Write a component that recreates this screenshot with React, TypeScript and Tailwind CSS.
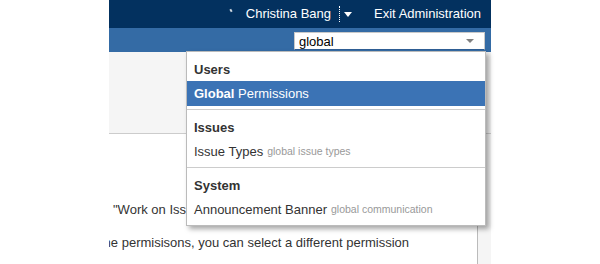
import React from 'react';

type Item = { strong?: string; label: string; hint?: string; active?: boolean };
type Section = { title: string; items: Item[] };

const sections: Section[] = [
    { title: 'Users', items: [{ strong: 'Global', label: ' Permissions', active: true }] },
    { title: 'Issues', items: [{ label: 'Issue Types', hint: 'global issue types' }] },
    { title: 'System', items: [{ label: 'Announcement Banner', hint: 'global communication' }] },
];

function Suggestions() {
    return (
        <div className="absolute left-[186px] top-[51px] w-[300px] bg-white border border-[#bbbbbb] shadow-[3px_3px_5px_rgba(0,0,0,0.35)]">
            {sections.map((s, i) => (
                <div key={s.title} className={i > 0 ? 'border-t border-[#cccccc] pt-[4px] pb-[3px]' : 'pt-[4px] pb-[3px]'}>
                    <div className="h-[25px] pt-[2px] flex items-center px-[7px] text-[13px] font-bold text-[#333333]">{s.title}</div>
                    {s.items.map((it) => (
                        <div
                            key={it.label}
                            className={
                                it.active
                                    ? 'h-[25px] flex items-center px-[7px] text-[13px] bg-[#3b73b5] text-white'
                                    : 'h-[25px] flex items-center px-[7px] text-[13px] text-[#333333]'
                            }
                        >
                            {it.strong && <span className="font-bold">{it.strong}</span>}
                            <span className="whitespace-pre">{it.label}</span>
                            {it.hint && <span className="ml-[4px] text-[10.5px] text-[#999999]">{it.hint}</span>}
                        </div>
                    ))}
                </div>
            ))}
        </div>
    );
}

export default function App() {
    return (
        <div
            className="relative w-[600px] h-[264px] overflow-hidden bg-white"
            style={{ fontFamily: '"Liberation Sans", Arial, sans-serif' }}
        >
            <div className="ml-[109px] w-[382px] h-full flex flex-col">
                {/* top header */}
                <div className="h-[28px] bg-[#03315f] flex items-center justify-end pr-[10px] text-white text-[13px]">
                    <span className="w-[2px] h-[3px] bg-white/80 mb-[7px] mr-[14px] rotate-[-30deg]" />
                    <span>Christina Bang</span>
                    <span className="ml-[8px] h-[16px] border-l border-dotted border-white" />
                    <svg width="8" height="5" viewBox="0 0 8 5" className="ml-[4px]">
                        <path d="M0 0h8L4 5z" fill="#ffffff" />
                    </svg>
                    <span className="ml-[22px]">Exit Administration</span>
                </div>

                {/* blue nav bar */}
                <div className="h-[24px] bg-[#346ba5] flex items-start justify-end pr-[6px] pt-[4px]">
                    <div className="w-[191px] h-[18px] bg-white border border-[#c9c9c9] border-b-[#2f5f95] flex items-center justify-between pl-[4px] pr-[10px]">
                        <span className="text-[13px] text-black leading-none">global</span>
                        <svg width="8" height="4" viewBox="0 0 8 4">
                            <path d="M0 0h8L4 4z" fill="#808080" />
                        </svg>
                    </div>
                </div>

                {/* page header area */}
                <div className="h-[82px] bg-[#f5f5f5] border-b border-[#cccccc]" />

                {/* content */}
                <div className="flex-1 flex">
                    <div className="flex-1 overflow-hidden text-[13px] text-[#333333]">
                        <p className="mt-[66px] ml-[4px] h-[20px] leading-[20px] whitespace-nowrap">"Work on Issues" permission</p>
                        <p className="mt-[13px] ml-[-9px] h-[20px] leading-[20px] whitespace-nowrap">
                            the permisisons, you can select a different permission
                        </p>
                    </div>
                    <div className="w-[14px] bg-[#f5f5f5] border-l border-[#bbbbbb]" />
                </div>
            </div>

            <Suggestions />
        </div>
    );
}
